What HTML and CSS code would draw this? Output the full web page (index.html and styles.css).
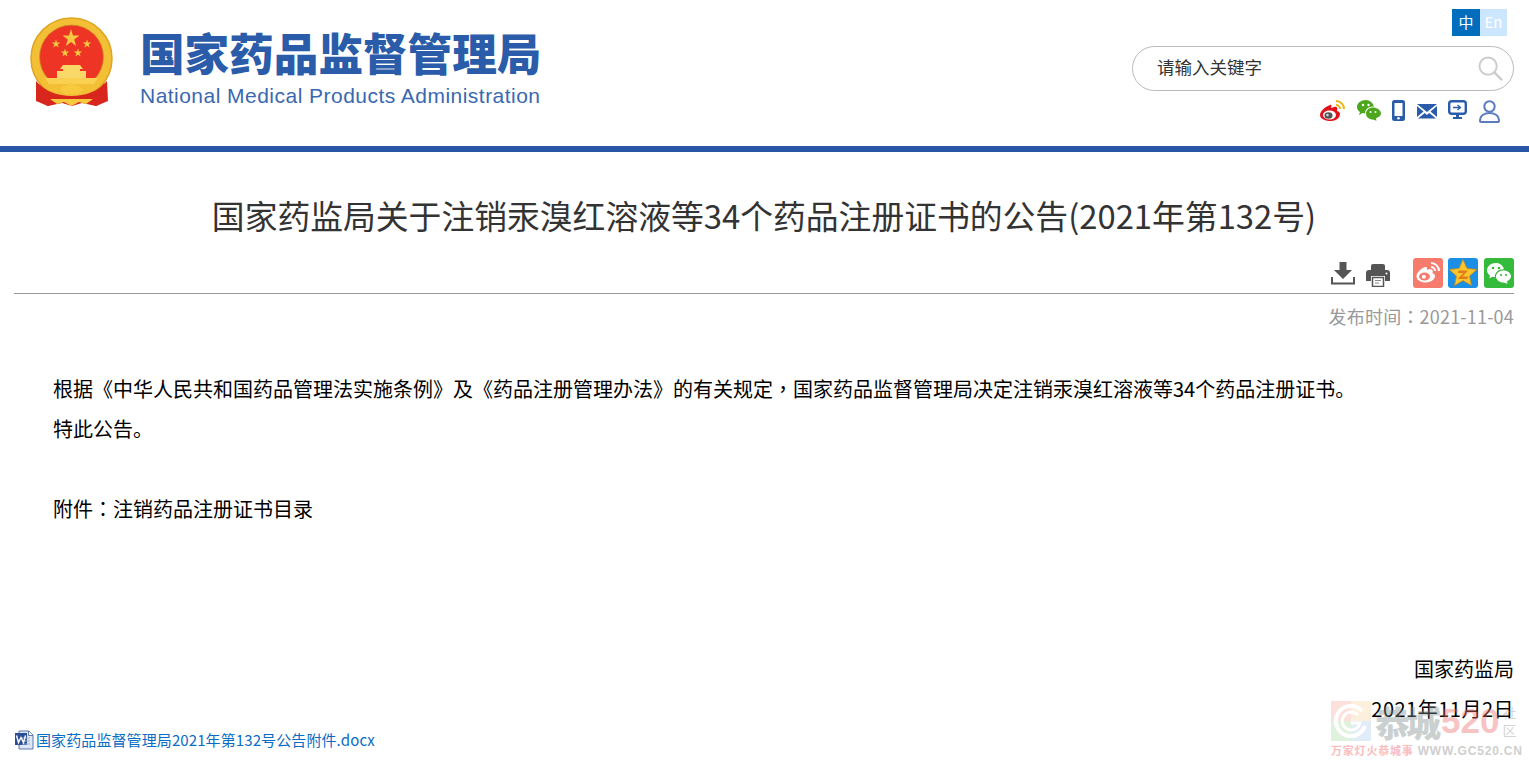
FILE: index.html
```html
<!DOCTYPE html>
<html lang="zh-CN">
<head>
    <meta charset="UTF-8">
    <title>国家药监局关于注销汞溴红溶液等34个药品注册证书的公告(2021年第132号)</title>
    <link rel="stylesheet" href="styles.css">
</head>
<body>
    <header class="header">
        <div class="logo">
            <svg class="emblem" viewBox="0 0 84 88" aria-hidden="true">
                <path d="M10 60 L8 82 L18 87 L32 84 L42 87 L52 84 L66 87 L76 82 L74 60Z" fill="#d8261c"/>
                <circle cx="41.500" cy="39.500" r="40.500" fill="#f2bf35" stroke="#dca523" stroke-width="1.500"/>
                <circle cx="41.500" cy="38" r="32" fill="#ee3424" stroke="#c9962a" stroke-width="0.800"/>
                <path d="M14 60 H69 A40 40 0 0 1 41.500 72 A40 40 0 0 1 14 60Z" fill="#f2bf35"/>
                <path d="M33 46 H50 L53 50 H50 V52 H56 V59 H27 V52 H33 V50 H30Z" fill="#f9d868"/>
                <path d="M15 59 H68 L64 65 H19Z" fill="#f9d050"/>
                <path d="M6 62 C14 72 28 77 41.500 77 C55 77 69 72 77 62 L78 82 L66 87 L52 81 H32 L18 87 L6 82Z" fill="#d8261c"/>
                <path d="M30 71 Q33 66 36 67 Q41.500 60 47 67 Q50 66 53 71 L48 75 H35Z" fill="#f6c93f"/>
                <path d="M20 80 H63 L56 85 L49 83 L41.500 87 L34 83 L27 85Z" fill="#f6c93f"/>
                <g fill="#f5c842">
                    <polygon points="41,10 43,16.500 49.500,16.500 44.200,20.500 46.200,27 41,23 35.800,27 37.800,20.500 32.500,16.500 39,16.500"/>
                    <polygon points="26,20.500 27,23.600 30.200,23.600 27.600,25.500 28.600,28.500 26,26.700 23.400,28.500 24.400,25.500 21.800,23.600 25,23.600"/>
                    <polygon points="57,20.500 58,23.600 61.200,23.600 58.600,25.500 59.600,28.500 57,26.700 54.400,28.500 55.400,25.500 52.800,23.600 56,23.600"/>
                    <polygon points="35,29.500 36,32.600 39.200,32.600 36.600,34.500 37.600,37.500 35,35.700 32.400,37.500 33.400,34.500 30.800,32.600 34,32.600"/>
                    <polygon points="48,29.500 49,32.600 52.200,32.600 49.600,34.500 50.600,37.500 48,35.700 45.400,37.500 46.400,34.500 43.800,32.600 47,32.600"/>
                </g>
            </svg>
            <div class="logo-text">
                <div class="logo-cn">国家药品监督管理局</div>
                <div class="logo-en">National Medical Products Administration</div>
            </div>
        </div>
        <div class="top-right">
            <div class="lang">
                <a class="lang-cn">中</a><a class="lang-en">En</a>
            </div>
            <div class="search">
                <span class="search-text">请输入关键字</span>
                <svg class="search-icon" viewBox="0 0 26 26" aria-hidden="true">
                    <circle cx="10.500" cy="10.500" r="9" fill="none" stroke="#ccc" stroke-width="2"/>
                    <path d="M17 17 L25 25" stroke="#ccc" stroke-width="2.500"/>
                </svg>
            </div>
            <div class="quick-icons">
                <svg width="25" height="21" viewBox="0 0 25 21" aria-hidden="true">
                    <path d="M10 5 C4 7 0 12 0 15 C0 19 6 21 11 21 C17 21 20 17 20 14 C20 12 18 11 17 11 C18 8 17 6 14 7 L11 8 C12 5 11 4 10 5Z" fill="#e0131c"/>
                    <ellipse cx="9.500" cy="15" rx="6.500" ry="4.500" fill="#fff"/>
                    <ellipse cx="8.500" cy="15.500" rx="4" ry="3.200" fill="#555"/>
                    <circle cx="7.500" cy="15" r="1.200" fill="#ddd"/>
                    <path d="M16 1 A8 8 0 0 1 24 9 M16 5 A4 4 0 0 1 20 9" fill="none" stroke="#eeb211" stroke-width="2"/>
                </svg>
                <svg width="24" height="21" viewBox="0 0 24 21" aria-hidden="true">
                    <path d="M9 0 C4 0 0 3 0 7 C0 9.500 1.500 11 3 12 L2 15 L5.500 13 L8 13.500 C8 9 12 6 17 6.500 C16 3 13 0 9 0Z" fill="#4ca71c"/>
                    <path d="M16 7.500 C12 7.500 9 10.200 9 13.500 C9 17 12 19.500 16 19.500 L19.500 20.800 L19 18.300 C22 17 24 15.500 24 13.500 C24 10.200 20 7.500 16 7.500Z" fill="#4ca71c"/>
                    <circle cx="6" cy="5" r="1.200" fill="#fff"/><circle cx="11.500" cy="5" r="1.200" fill="#fff"/>
                    <circle cx="13.500" cy="12" r="1" fill="#fff"/><circle cx="18.500" cy="12" r="1" fill="#fff"/>
                </svg>
                <svg width="13" height="21" viewBox="0 0 13 21" aria-hidden="true">
                    <rect x="0" y="0" width="13" height="21" rx="2.500" fill="#2a5caa"/>
                    <rect x="2.500" y="3" width="8" height="13" fill="#fff"/>
                    <circle cx="6.500" cy="18.300" r="1.300" fill="#fff"/>
                </svg>
                <svg class="icon-mail" width="20" height="16" viewBox="0 0 20 16" aria-hidden="true">
                    <path d="M0 1 H20 L10 9Z M0 3 L6.500 8.500 L0 14Z M20 3 L13.500 8.500 L20 14Z M1 15.500 L7.800 10 L10 12 L12.200 10 L19 15.500Z" fill="#2a5caa"/>
                </svg>
                <svg width="19" height="20" viewBox="0 0 19 20" aria-hidden="true">
                    <rect x="1.200" y="1.200" width="16.600" height="12.600" rx="2.500" fill="none" stroke="#2a5caa" stroke-width="2.400"/>
                    <path d="M5 7.500 H12 M9.500 5 L12.500 7.500 L9.500 10" fill="none" stroke="#2a5caa" stroke-width="1.300"/>
                    <path d="M8 15 H11 V17 H14 V19 H5 V17 H8Z" fill="#2a5caa"/>
                </svg>
                <svg width="21" height="23" viewBox="0 0 21 23" aria-hidden="true">
                    <circle cx="10.500" cy="6.500" r="5.200" fill="none" stroke="#5b7cc0" stroke-width="2"/>
                    <path d="M1 21 C1 15 6 13 10.500 13 C15 13 20 15 20 21 C20 22 19 22 18 22 H3 C2 22 1 22 1 21Z" fill="none" stroke="#5b7cc0" stroke-width="2"/>
                </svg>
            </div>
        </div>
    </header>

    <main class="article">
        <h1 class="title">国家药监局关于注销汞溴红溶液等34个药品注册证书的公告(2021年第132号)</h1>

        <div class="tools">
            <svg class="tool-download" width="24" height="24" viewBox="0 0 24 24" aria-hidden="true">
                <path d="M8.500 1 H15.500 V9 H21 L12 18 L3 9 H8.500Z" fill="#555"/>
                <path d="M1 16 V22.500 H23 V16" fill="none" stroke="#555" stroke-width="2"/>
            </svg>
            <svg class="tool-print" width="24" height="24" viewBox="0 0 24 24" aria-hidden="true">
                <path d="M5 7 V3 Q5 1 7 1 H17 Q19 1 19 3 V7Z" fill="#555"/>
                <path d="M3 7 H21 Q24 7 24 10 V18 H19 V13 H5 V18 H0 V10 Q0 7 3 7Z" fill="#555"/>
                <path d="M6.500 14.500 H17.500 V23.500 H6.500Z" fill="#fff" stroke="#555" stroke-width="1.500"/>
                <path d="M9 17.500 H15 M9 20 H13" stroke="#888" stroke-width="1.200"/>
                <circle cx="20.500" cy="10.500" r="1" fill="#fff"/>
            </svg>
            <svg class="share share-first" viewBox="0 0 30 30" aria-hidden="true">
                <rect width="30" height="30" rx="3" fill="#f77b6d"/>
                <path d="M12 9 C7 11 3.500 15 3.500 18.500 C3.500 22 8 24.500 12.500 24.500 C18 24.500 22 21 22 18 C22 16 20 15.500 19.500 15 C20.500 12.500 19 10.500 15.500 11.500 C15 11.500 14 12 14 12 C14.500 9.500 13.500 8.500 12 9Z" fill="#fff"/>
                <ellipse cx="11.500" cy="18.500" rx="5.500" ry="4" fill="#f77b6d"/>
                <circle cx="10.800" cy="18.800" r="2" fill="#fff"/>
                <path d="M18 5 A8 8 0 0 1 26 13 M18 9 A4 4 0 0 1 22 13" fill="none" stroke="#fff" stroke-width="2"/>
            </svg>
            <svg class="share share-qzone" viewBox="0 0 30 30" aria-hidden="true">
                <rect width="30" height="30" rx="3" fill="#1b8fe6"/>
                <polygon points="15,1.500 19,10.500 28.800,11.500 21.500,18 23.500,27.500 15,22.500 6.500,27.500 8.500,18 1.200,11.500 11,10.500" fill="#fac62d" stroke="#c98a16" stroke-width="0.800"/>
                <path d="M10.500 12.500 H20 L14.500 18.500 H20.500 L19 21 H9.500 L15.500 15 H10Z" fill="#e27c18"/>
            </svg>
            <svg class="share" viewBox="0 0 30 30" aria-hidden="true">
                <rect width="30" height="30" rx="3" fill="#35bb3c"/>
                <path d="M12 5 C7 5 3 8.200 3 12.300 C3 14.600 4.300 16.400 6 17.700 L5.300 20.300 L8.500 18.800 L11 19.200 C10.500 14.500 14.500 11 20 11.300 C19 7.500 16 5 12 5Z" fill="#fff"/>
                <path d="M19.500 12.500 C15.300 12.500 12 15.200 12 18.500 C12 21.800 15.300 24.500 19.500 24.500 L23.500 25.800 L23 23.300 C25.500 22 27 20.400 27 18.500 C27 15.200 23.700 12.500 19.500 12.500Z" fill="#fff"/>
                <circle cx="9" cy="10" r="1.300" fill="#35bb3c"/><circle cx="15" cy="10" r="1.300" fill="#35bb3c"/>
                <circle cx="17" cy="17" r="1.100" fill="#35bb3c"/><circle cx="22" cy="17" r="1.100" fill="#35bb3c"/>
            </svg>
        </div>

        <div class="pubdate">发布时间<span class="mid" lang="zh-TW">：</span>2021-11-04</div>

        <div class="content">
            <p>根据《中华人民共和国药品管理法实施条例》及《药品注册管理办法》的有关规定<span class="mid" lang="zh-TW">，</span>国家药品监督管理局决定注销汞溴红溶液等34个药品注册证书。</p>
            <p>特此公告。</p>
            <p class="blank"></p>
            <p>附件<span class="mid" lang="zh-TW">：</span>注销药品注册证书目录</p>
            <p class="blank"></p>
            <p class="blank"></p>
            <p class="blank"></p>
            <p class="sign">国家药监局</p>
            <p class="sign sign-date">2021年11月2日</p>
        </div>

        <a class="attachment">
            <svg width="20" height="20" viewBox="0 0 20 20" aria-hidden="true">
                <path d="M5 1 H15 L19 5 V19 H5Z" fill="#dfe7f4" stroke="#5c79ad"/>
                <path d="M14.500 1 V5.500 H19" fill="#fff" stroke="#5c79ad"/>
                <rect x="1" y="3" width="12" height="12" fill="#2b4f96"/>
                <path d="M8 8 H16 M8 11 H16 M8 14 H16" stroke="#9db2d6"/>
                <path d="M2.500 5.500 L4.500 12.500 L7 7.500 L9.500 12.500 L11.500 5.500" fill="none" stroke="#fff" stroke-width="1.400"/>
            </svg>
            <span>国家药品监督管理局2021年第132号公告附件.docx</span>
        </a>
    </main>

    <div class="watermark" aria-hidden="true">
        <svg class="wm-logo" viewBox="0 0 40 40">
            <rect x="0" y="0" width="20" height="20" fill="#f8b3a6"/>
            <rect x="20" y="0" width="20" height="20" fill="#fcd9ac"/>
            <rect x="0" y="20" width="20" height="20" fill="#b1dfae"/>
            <rect x="20" y="20" width="20" height="20" fill="#b4d2f0"/>
            <path d="M31 10 A15 15 0 1 0 34 25" fill="none" stroke="#fff" stroke-width="4"/>
            <path d="M27 14 A9 9 0 1 0 29 22 H20" fill="none" stroke="#fff" stroke-width="3"/>
        </svg>
        <div class="wm-main">
            <span class="wm-name">恭城</span><span class="wm-num">520</span><span class="wm-she">社<br>区</span>
        </div>
        <div class="wm-line"><span class="wm-red">万家灯火恭城事</span> WWW.GC520.CN</div>
    </div>
</body>
</html>
```

FILE: styles.css
```css
html, body {
    margin: 0;
    padding: 0;
    height: 764px;
    overflow: hidden;
}
body {
    position: relative;
    background: #fff;
    font-family: "Noto Sans CJK SC", "Noto Sans", sans-serif;
    color: #000;
}

/* top */
.header {
    height: 146px;
    box-sizing: border-box;
    padding: 9px 15px 0 30px;
    display: flex;
    justify-content: space-between;
    box-shadow: 0 6px 0 #2a56a8;
}
.logo {
    display: flex;
    align-items: flex-start;
}
.emblem {
    width: 84px;
    height: 88px;
    margin-top: 10px;
    overflow: visible;
}
.logo-text {
    margin-left: 26px;
    padding-top: 17px;
}
.logo-cn {
    font-size: 44.600px;
    line-height: 52px;
    font-weight: 900;
    color: #2a5caa;
    white-space: nowrap;
}
.logo-en {
    font-family: "Liberation Sans", sans-serif;
    font-size: 21px;
    line-height: 26px;
    margin-top: 5px;
    color: #3a68b0;
    letter-spacing: 0.470px;
    white-space: nowrap;
}

.top-right {
    width: 382px;
}
.lang {
    display: flex;
    justify-content: flex-end;
    padding-right: 7px;
}
.lang a {
    width: 28px;
    height: 27px;
    line-height: 26px;
    text-align: center;
    font-size: 15px;
    color: #fff;
}
.lang-cn {
    background: #006ebd;
}
.lang .lang-en {
    width: 27px;
    background: #cce6ff;
}
.search {
    margin-top: 10px;
    height: 45px;
    box-sizing: border-box;
    border: 1.500px solid #bbb;
    border-radius: 23px;
    padding: 0 10px 0 24px;
    display: flex;
    align-items: center;
    justify-content: space-between;
}
.search-text {
    font-size: 17.500px;
    color: #333;
    margin-bottom: 4px;
}
.search-icon {
    width: 25px;
    height: 25px;
}
.quick-icons {
    margin-top: 9px;
    padding-right: 14px;
    display: flex;
    justify-content: flex-end;
    align-items: flex-start;
    gap: 11.600px;
}
.icon-mail {
    margin-top: 3px;
}

/* article */
.article {
    margin: 6px 15px 0 14px;
}
.title {
    margin: 0;
    padding-top: 38px;
    font-size: 32.800px;
    line-height: 50px;
    font-weight: 400;
    color: #333;
    text-align: center;
    white-space: nowrap;
}
.tools {
    margin-top: 18px;
    height: 36px;
    box-sizing: border-box;
    padding-bottom: 5px;
    border-bottom: 1px solid #999;
    display: flex;
    justify-content: flex-end;
    align-items: flex-end;
    gap: 5px;
}
.tools svg {
    flex: none;
}
.tool-download {
    margin-right: 7px;
    margin-bottom: 3px;
}
.tool-print {
    margin-bottom: 1px;
    margin-left: -1px;
}
.share {
    width: 30px;
    height: 30px;
}
.share-first {
    margin-left: 18px;
}
.share-qzone {
    margin-right: 1px;
}
.pubdate {
    margin-top: 10px;
    font-size: 18px;
    line-height: 24px;
    color: #999;
    text-align: right;
    letter-spacing: 0.200px;
}
/* these marks sit in the middle of the em box in the reference */
.mid {
    font-family: "Noto Sans CJK TC", sans-serif;
}
.content {
    margin-top: 41px;
    padding-left: 39px;
    font-size: 20px;
    line-height: 40px;
}
.content p {
    margin: 0;
}
.content .blank {
    height: 40px;
}
.content .sign {
    text-align: right;
}
.content .sign-date {
    letter-spacing: 0.500px;
}
.attachment {
    display: flex;
    align-items: center;
    gap: 2px;
    height: 21px;
    font-size: 15px;
    letter-spacing: 0.100px;
    color: #0a6cc4;
}

/* watermark sits over the bottom right corner */
.watermark {
    position: absolute;
    left: 1331px;
    top: 701px;
    width: 198px;
    height: 60px;
    opacity: 0.4;
    pointer-events: none;
}
.wm-logo {
    position: absolute;
    left: 0;
    top: 0;
    width: 40px;
    height: 40px;
}
.wm-main {
    position: absolute;
    left: 44px;
    top: 0;
    display: flex;
    align-items: center;
    height: 40px;
}
.wm-name {
    font-size: 35px;
    font-weight: 900;
    color: #7d8c8c;
    letter-spacing: -4px;
}
.wm-num {
    font-family: "Liberation Sans", sans-serif;
    font-size: 35px;
    font-weight: 700;
    color: #ee6a6a;
    margin-left: 4px;
}
.wm-she {
    font-size: 14px;
    line-height: 18px;
    color: #999;
    margin-left: 3px;
}
.wm-line {
    position: absolute;
    left: 0;
    top: 42px;
    font-family: "Liberation Sans", "Noto Sans CJK SC", sans-serif;
    font-size: 12px;
    font-weight: 700;
    line-height: 16px;
    letter-spacing: 0.800px;
    color: #888;
    white-space: nowrap;
}
.wm-red {
    color: #ee5a5a;
    font-size: 11px;
}
```
